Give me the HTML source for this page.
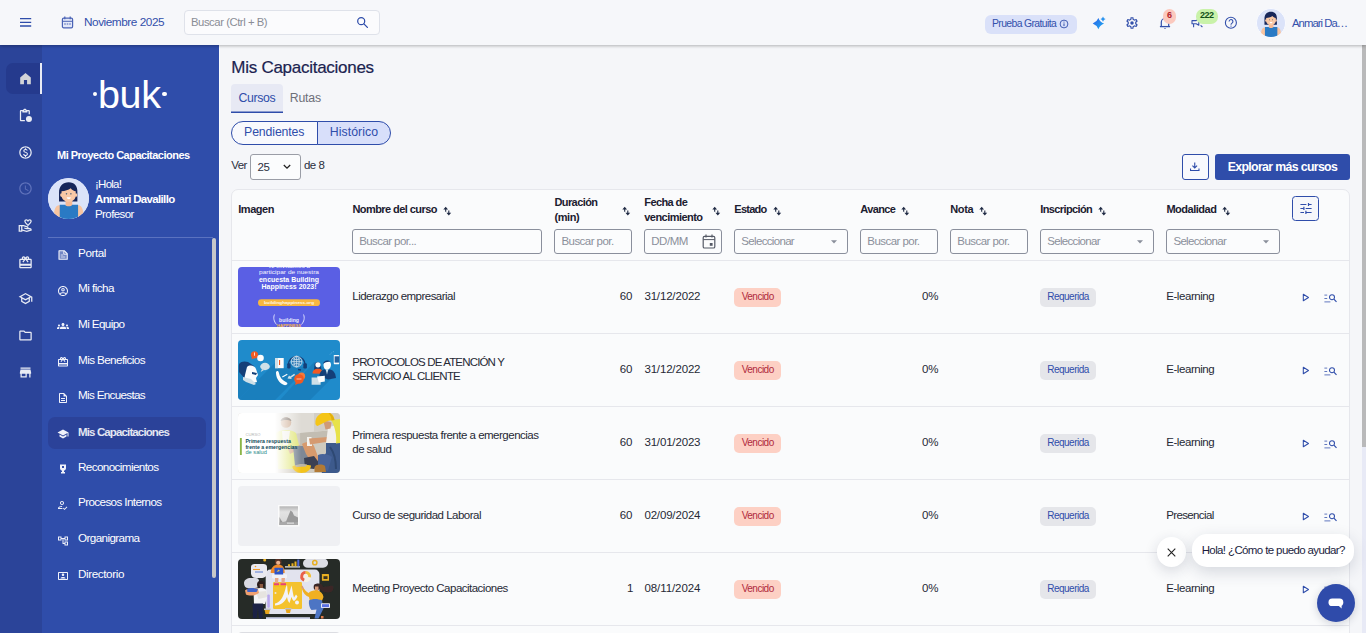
<!DOCTYPE html>
<html lang="es">
<head>
<meta charset="utf-8">
<title>Mis Capacitaciones</title>
<style>
*{box-sizing:border-box;margin:0;padding:0}
html,body{width:1366px;height:633px;overflow:hidden}
body{font-family:"Liberation Sans",sans-serif;font-size:12px;color:#1f2a44;background:#f5f6f9;position:relative}
.abs{position:absolute}
svg{display:block}
/* top bar */
#top{position:absolute;left:0;top:0;width:1366px;height:45px;background:#f6f7fa;box-shadow:0 1px 3px rgba(0,0,0,.28);z-index:10}
#top .t{position:absolute;white-space:nowrap}
/* rail */
#rail{position:absolute;left:0;top:45px;width:42px;height:588px;background:#2b4499}
#side{position:absolute;left:42px;top:45px;width:177px;height:588px;background:#2f4daa;color:#fff}
#side .mi{position:absolute;left:36px;white-space:nowrap;font-size:11.700px;color:#fff;letter-spacing:-.35px}
#side .ic{position:absolute;left:14.700px}
/* main */
#main{position:absolute;left:219px;top:45px;width:1147px;height:588px;background:#f5f6f9;overflow:hidden}
#main .t{position:absolute;white-space:nowrap}
.card{position:absolute;left:12px;top:145px;width:1119px;height:460px;background:#fafbfc;border:1px solid #e6e7ec;border-radius:7px}
.th{position:absolute;font-weight:bold;font-size:11px;color:#1c2030;white-space:nowrap;letter-spacing:-.3px;line-height:15px}
.inp{position:absolute;top:39px;height:25px;border:1px solid #8a8f9c;border-radius:3px;background:#fbfcfd;font-size:11.5px;color:#8b909b;padding:0 0 0 6px;line-height:23px;white-space:nowrap;overflow:hidden;letter-spacing:-.3px}
.row{position:absolute;left:0;width:1117px;height:73px;border-top:1px solid #e6e7ec}
.row .c{position:absolute;white-space:nowrap;font-size:11.5px;color:#262935;letter-spacing:-.3px;line-height:14px}
.thumb{position:absolute;left:6px;top:6px;width:102px;height:60px;border-radius:4px;overflow:hidden}
.bad{position:absolute;height:19px;border-radius:5px;font-size:10px;line-height:18px;text-align:center;letter-spacing:-.3px}
.venc{left:502px;width:47px;background:#fdd0c4;color:#b02a3c}
.req{left:808px;width:56px;background:#e5e6ea;color:#2f4daa}
</style>
</head>
<body>
<svg width="0" height="0" style="position:absolute"><defs>
<symbol id="ava" viewBox="0 0 30 30"><circle cx="15" cy="15" r="15" fill="#dbe3f9"/>
<path d="M8 17V10.5C8 5.8 10.8 3 15 3s6.6 2.8 6.3 7.5V17H8z" fill="#16265a"/>
<path d="M4.4 30c-.3-5 .2-8.800 2.400-9.900 1-.5 2-.3 2.400.4V30zM25.600 30c.3-5-.2-8.800-2.400-9.900-1-.5-2-.3-2.400.4V30z" fill="#f8c4a0"/>
<rect x="12.700" y="14" width="4.900" height="7" fill="#f5b995"/>
<path d="M8.500 19.300h4c.4 1.500 4.600 1.500 5 0h4.300V30H8.500z" fill="#2a7ac4"/>
<path d="M9.800 9.600c2.500-.2 5-.9 6.700-2.200.8 1.200 2.200 2 3.600 2.200v3.200c0 2.400-2.400 4.500-5.100 4.500s-5.200-2.100-5.200-4.500z" fill="#f9c8a6"/>
<ellipse cx="9.700" cy="12.400" rx=".9" ry="1.300" fill="#f9c8a6"/><ellipse cx="20.300" cy="12.400" rx=".9" ry="1.300" fill="#f9c8a6"/>
<circle cx="13.400" cy="11.500" r=".55" fill="#5b6b7a"/><circle cx="16.600" cy="11.500" r=".55" fill="#5b6b7a"/>
<path d="M13.600 14h2.900c-.1 1-.8 1.400-1.450 1.400S13.700 15 13.600 14z" fill="#fff"/>
</symbol></defs></svg>
<div id="top">
<svg class="abs" style="left:20px;top:17px" width="12" height="11" viewBox="0 0 12 11"><path d="M0 1.600h11.200M0 5.300h11.200M0 9h11.200" stroke="#2f4daa" stroke-width="1.300" fill="none"/></svg>
<svg class="abs" style="left:61px;top:16px" width="13" height="13" viewBox="0 0 13 13"><rect x="1.4" y="2.2" width="10.2" height="9.6" rx="1.3" fill="#e3e8f8" stroke="#4a63b5" stroke-width="1.2"/><path d="M3.8 .6v2.6M9.2 .6v2.6" stroke="#4a63b5" stroke-width="1.2"/><path d="M1.4 5.3h10.2" stroke="#4a63b5" stroke-width="1"/><path d="M3.2 8h1.6M5.7 8h1.6M8.2 8h1.6" stroke="#4a63b5" stroke-width="1.2"/></svg>
<div class="t" style="left:84px;top:15px;font-size:11.8px;line-height:15px;color:#3350ab;letter-spacing:-.46px">Noviembre 2025</div>
<div class="abs" style="left:184px;top:10px;width:196px;height:25px;border:1px solid #dfe2ea;border-radius:4px;background:#fbfbfd"></div>
<div class="t" style="left:191px;top:15px;font-size:11.3px;line-height:15px;color:#8a8d96;letter-spacing:-.45px">Buscar (Ctrl + B)</div>
<svg class="abs" style="left:356px;top:16px" width="13" height="13" viewBox="0 0 13 13"><circle cx="5.2" cy="5.2" r="3.5" fill="none" stroke="#2f4daa" stroke-width="1.25"/><path d="M7.9 7.9l3.5 3.5" stroke="#2f4daa" stroke-width="1.3" stroke-linecap="round"/></svg>
<div class="abs" style="left:985px;top:15px;width:92px;height:19px;border-radius:6px;background:#dae1f9"></div>
<div class="t" style="letter-spacing:-0.62px;left:992px;top:17px;font-size:10.4px;line-height:14px;color:#3350ab">Prueba Gratuita</div>
<svg class="abs" style="left:1059px;top:19px" width="10" height="10" viewBox="0 0 10 10"><circle cx="5" cy="5" r="3.9" fill="none" stroke="#3350ab" stroke-width=".9"/><path d="M5 4.4v2.7" stroke="#3350ab" stroke-width="1"/><circle cx="5" cy="3" r=".6" fill="#3350ab"/></svg>
<svg class="abs" style="left:1092px;top:16px" width="14" height="14" viewBox="0 0 14 14"><defs><linearGradient id="spk" x1="0" y1="0" x2="1" y2="1"><stop offset="0" stop-color="#2a5fe8"/><stop offset="1" stop-color="#23b0f0"/></linearGradient></defs><path d="M6.400 1.900Q8 6 12.100 7.600Q8 9.200 6.400 13.300Q4.800 9.200.7 7.600Q4.800 6 6.400 1.900Z" fill="url(#spk)"/><path d="M11 .5Q11.600 2.500 13.600 3.100Q11.600 3.700 11 5.700Q10.400 3.700 8.400 3.100Q10.400 2.500 11 .5Z" fill="#2a93ee"/></svg>
<svg class="abs" style="left:1125px;top:15.5px" width="14" height="14" viewBox="0 0 24 24"><path fill="#3350ab" d="M19.43 12.98c.04-.32.07-.64.07-.98s-.03-.66-.07-.98l2.11-1.65c.19-.15.24-.42.12-.64l-2-3.46c-.12-.22-.39-.3-.61-.22l-2.49 1c-.52-.4-1.08-.73-1.69-.98l-.38-2.65C14.46 2.18 14.25 2 14 2h-4c-.25 0-.46.18-.49.42l-.38 2.65c-.61.25-1.17.59-1.69.98l-2.49-1c-.23-.09-.49 0-.61.22l-2 3.46c-.13.22-.07.49.12.64l2.11 1.65c-.04.32-.07.65-.07.98s.03.66.07.98l-2.11 1.65c-.19.15-.24.42-.12.64l2 3.46c.12.22.39.3.61.22l2.49-1c.52.4 1.08.73 1.69.98l.38 2.65c.03.24.24.42.49.42h4c.25 0 .46-.18.49-.42l.38-2.65c.61-.25 1.17-.59 1.69-.98l2.49 1c.23.09.49 0 .61-.22l2-3.46c.12-.22.07-.49-.12-.64l-2.11-1.65zm-1.98-1.71c.04.31.05.52.05.73 0 .21-.02.43-.05.73l-.14 1.13.89.7 1.08.84-.7 1.21-1.27-.51-1.04-.42-.9.68c-.43.32-.84.56-1.25.73l-1.06.43-.16 1.13-.2 1.35h-1.4l-.19-1.35-.16-1.13-1.06-.43c-.43-.18-.83-.41-1.23-.71l-.91-.7-1.06.43-1.27.51-.7-1.21 1.08-.84.89-.7-.14-1.13c-.03-.31-.05-.54-.05-.74s.02-.43.05-.73l.14-1.13-.89-.7-1.08-.84.7-1.21 1.27.51 1.04.42.9-.68c.43-.32.84-.56 1.25-.73l1.06-.43.16-1.13.2-1.35h1.39l.19 1.35.16 1.13 1.06.43c.43.18.83.41 1.23.71l.91.7 1.06-.43 1.27-.51.7 1.21-1.07.85-.89.7.14 1.13z"/><circle cx="12" cy="12" r="3" fill="#3350ab"/></svg>
<svg class="abs" style="left:1159px;top:16px" width="12" height="14" viewBox="0 0 12 14"><path d="M2.3 10.3V6.2a3.7 3.7 0 0 1 7.4 0v4.1" fill="none" stroke="#3350ab" stroke-width="1.2"/><path d="M.9 10.6h10.2" stroke="#3350ab" stroke-width="1.3"/><path d="M4.9 12.1a1.2 1.2 0 0 0 2.2 0z" fill="#3350ab"/></svg>
<div class="abs" style="left:1163px;top:9px;width:13px;height:15px;border-radius:6.5px;background:#fbc9be"></div>
<div class="t" style="left:1163px;top:9.300px;width:13px;text-align:center;font-size:9px;line-height:13px;color:#b4232c;font-weight:bold">6</div>
<svg class="abs" style="left:1191px;top:19px" width="13" height="10" viewBox="0 0 13 10"><path d="M1 1.6h4.2l2.6-1.4v6l-2.6-1.4H1z" fill="none" stroke="#3350ab" stroke-width="1.1" stroke-linejoin="round"/><path d="M2.6 5v3.2M9.6 6.4l1.8 1.6" stroke="#3350ab" stroke-width="1.1"/></svg>
<div class="abs" style="left:1196px;top:9px;width:22px;height:15px;border-radius:7px;background:#c9f2a9"></div>
<div class="t" style="left:1196px;top:9.300px;width:22px;text-align:center;font-size:9px;line-height:13px;color:#14501a;font-weight:bold;letter-spacing:-.55px;text-indent:-.5px">222</div>
<svg class="abs" style="left:1224px;top:16px" width="14" height="14" viewBox="0 0 14 14"><circle cx="6.9" cy="6.8" r="5.5" fill="none" stroke="#3350ab" stroke-width="1.1"/><path d="M5.1 5.5a1.9 1.9 0 1 1 2.9 1.6c-.7.5-1 .8-1 1.6" fill="none" stroke="#3350ab" stroke-width="1.1"/><circle cx="7" cy="10.1" r=".7" fill="#3350ab"/></svg>
<div class="abs" id="av1" style="left:1256px;top:8px;width:30px;height:30px;border-radius:50%;background:#dce3f8;border:1px solid #fbfcff;overflow:hidden"><svg width="28" height="28"><use href="#ava"/></svg></div>
<div class="t" style="letter-spacing:-0.95px;left:1292px;top:16px;font-size:11.3px;line-height:14px;color:#3350ab">Anmari Da…</div>
</div>
<div id="rail">
<div class="abs" style="left:6px;top:18px;width:36px;height:31px;border-radius:7px 0 0 7px;background:#253a8d"></div>
<div class="abs" style="left:40px;top:18px;width:2px;height:31px;background:#e9ecf5"></div>
<svg class="abs" style="left:18px;top:26.1px" width="15" height="15" viewBox="0 0 24 24" fill="#d3d4d8"><path d="M12 3L3.500 10.500V21h6v-6.500h5V21h6V10.500z"/></svg>
<svg class="abs" style="left:18px;top:62.8px" width="15" height="15" viewBox="0 0 24 24" fill="#e9ecf5"><path d="M5 5h2v2h8V5h2v5h2V5c0-1.100-.9-2-2-2h-3.200C13.400 1.800 12.300 1 11 1S8.600 1.800 8.200 3H5c-1.100 0-2 .9-2 2v14c0 1.100.9 2 2 2h6v-2H5zm6-2c.55 0 1 .45 1 1s-.45 1-1 1-1-.45-1-1 .45-1 1-1z"/><circle cx="17.500" cy="17.500" r="4.800"/></svg>
<svg class="abs" style="left:18px;top:99.5px" width="15" height="15" viewBox="0 0 24 24" fill="#e9ecf5"><path d="M12 2C6.480 2 2 6.480 2 12s4.480 10 10 10 10-4.480 10-10S17.520 2 12 2zm0 18c-4.410 0-8-3.590-8-8s3.590-8 8-8 8 3.590 8 8-3.590 8-8 8zm.890-8.900c-1.780-.590-2.640-.960-2.640-1.900 0-1.020 1.110-1.390 1.810-1.390 1.310 0 1.790.990 1.900 1.340l1.580-.670c-.150-.440-.820-1.910-2.660-2.230V5h-1.750v1.260c-2.600.560-2.620 2.850-2.620 2.960 0 2.270 2.250 2.910 3.350 3.310 1.580.560 2.280 1.070 2.280 2.030 0 1.130-1.050 1.610-1.980 1.610-1.820 0-2.340-1.870-2.400-2.090l-1.660.670c.630 2.190 2.280 2.780 3.020 2.960V19h1.750v-1.240c.520-.090 3.020-.590 3.020-3.220.010-1.390-.600-2.610-3-3.440z"/></svg>
<svg class="abs" style="left:18px;top:136.2px" width="15" height="15" viewBox="0 0 24 24" fill="#5f72bb"><path d="M11.990 2C6.470 2 2 6.480 2 12s4.470 10 9.990 10C17.520 22 22 17.520 22 12S17.520 2 11.990 2zM12 20c-4.420 0-8-3.580-8-8s3.580-8 8-8 8 3.580 8 8-3.580 8-8 8zm.500-13H11v6l5.250 3.150.750-1.230-4.500-2.670z"/></svg>
<svg class="abs" style="left:18px;top:172.9px" width="15" height="15" viewBox="0 0 24 24" fill="#e9ecf5"><path d="M16 13c3.090-2.810 6-5.440 6-7.700C22 3.450 20.550 2 18.700 2c-1.040 0-2.050.490-2.700 1.250C15.340 2.490 14.340 2 13.300 2 11.450 2 10 3.450 10 5.300c0 2.260 2.910 4.890 6 7.700zm-2.700-9c.440 0 .890.210 1.180.550L16 6.340l1.520-1.790c.290-.340.740-.550 1.180-.550.740 0 1.300.560 1.300 1.300 0 1.120-2.040 3.170-4 4.990-1.960-1.820-4-3.880-4-4.990 0-.740.560-1.300 1.300-1.300zM19 16h-2c0-1.200-.750-2.280-1.870-2.700L8.970 11H1v11h6v-1.440l7 1.940 8-2.500v-1c0-1.660-1.340-3-3-3zM3 20v-7h2v7H3zm10.970.410L7 18.480V13h1.610l5.820 2.170c.340.130.570.460.570.830 0 0-1.990-.050-2.300-.150l-2.380-.790-.630 1.900 2.380.790c.510.170 1.040.260 1.580.260H19c.390 0 .740.230.900.560l-5.930 1.840z"/></svg>
<svg class="abs" style="left:18px;top:209.6px" width="15" height="15" viewBox="0 0 24 24" fill="#e9ecf5"><path d="M20 6h-2.180c.11-.31.180-.65.180-1 0-1.660-1.340-3-3-3-1.050 0-1.960.54-2.500 1.350l-.5.670-.5-.68C10.960 2.540 10.050 2 9 2 7.340 2 6 3.340 6 5c0 .35.070.69.180 1H4c-1.110 0-1.990.89-1.990 2L2 19c0 1.110.89 2 2 2h16c1.110 0 2-.89 2-2V8c0-1.110-.89-2-2-2zm-5-2c.55 0 1 .45 1 1s-.45 1-1 1-1-.45-1-1 .45-1 1-1zM9 4c.55 0 1 .45 1 1s-.45 1-1 1-1-.45-1-1 .45-1 1-1zm11 15H4v-2h16v2zm0-5H4V8h5.080L7 10.830 8.620 12 11 8.760l1-1.360 1 1.360L15.380 12 17 10.830 14.920 8H20v6z"/></svg>
<svg class="abs" style="left:18px;top:246.3px" width="15" height="15" viewBox="0 0 24 24" fill="#e9ecf5"><path d="M12 3L1 9l4 2.180v6L12 21l7-3.820v-6l2-1.090V17h2V9L12 3zm6.820 6L12 12.720 5.180 9 12 5.280 18.820 9zM17 15.990l-5 2.730-5-2.730v-3.720L12 15l5-2.730v3.720z"/></svg>
<svg class="abs" style="left:18px;top:283.0px" width="15" height="15" viewBox="0 0 24 24" fill="#e9ecf5"><path d="M9.170 6l2 2H20v10H4V6h5.170M10 4H4c-1.100 0-1.990.9-1.990 2L2 18c0 1.100.9 2 2 2h16c1.100 0 2-.9 2-2V8c0-1.100-.9-2-2-2h-8l-2-2z"/></svg>
<svg class="abs" style="left:18px;top:319.7px" width="15" height="15" viewBox="0 0 24 24" fill="#e9ecf5"><path d="M20 4H4v2h16V4zm1 10v-2l-1-5H4l-1 5v2h1v6h10v-6h4v6h2v-6h1zm-9 4H6v-4h6v4z"/></svg>
</div>
<div id="side">
<div class="abs" style="left:50.700px;top:46.500px;width:4.400px;height:4.400px;border-radius:50%;background:#fff"></div>
<div class="abs" style="left:120.300px;top:46.500px;width:4.400px;height:4.400px;border-radius:50%;background:#fff"></div>
<div class="abs" id="logo" style="left:56px;top:25.500px;font-size:39.500px;line-height:46px;color:#fff;letter-spacing:-.4px;white-space:nowrap">buk</div>
<div class="abs" style="letter-spacing:-0.52px;left:15px;top:103px;font-size:11px;line-height:14px;font-weight:bold;color:#fff;white-space:nowrap">Mi Proyecto Capacitaciones</div>
<div class="abs" style="left:5.800px;top:132.500px;width:41.400px;height:41.400px;border-radius:50%;overflow:hidden;background:#dbe3f9"><svg width="41.400" height="41.400"><use href="#ava"/></svg></div>
<div class="abs" style="letter-spacing:-0.75px;left:53px;top:132px;font-size:11.500px;line-height:14px;color:#fff;white-space:nowrap">¡Hola!</div>
<div class="abs" style="letter-spacing:-0.66px;left:53px;top:147px;font-size:11.500px;line-height:14px;font-weight:bold;color:#fff;white-space:nowrap">Anmari Davalillo</div>
<div class="abs" style="letter-spacing:-0.58px;left:53px;top:162px;font-size:11.500px;line-height:14px;color:#fff;white-space:nowrap">Profesor</div>
<div class="abs" style="left:6px;top:191.500px;width:165px;height:1px;background:#5a72c0"></div>
<div class="abs" style="left:170px;top:193px;width:4px;height:340px;border-radius:2px;background:#c6c7ca"></div>
<div class="abs" style="left:6px;top:372.200px;width:157.800px;height:31.600px;border-radius:7px;background:#2b4299"></div>
<svg class="ic" style="top:204.1px" width="12" height="12" viewBox="0 0 24 24" fill="#f0f2fa"><path d="M4 3.500h10.500L20.500 9.500V20.500H4z" fill="#f0f2fa" fill-opacity=".35" stroke="#f0f2fa" stroke-width="2.200" stroke-linejoin="round"/><path d="M13.500 4v6.500H20" fill="none" stroke="#f0f2fa" stroke-width="1.800"/><path d="M7.500 12h5M7.500 16h9" stroke="#f0f2fa" stroke-width="1.600"/></svg><div class="mi" style="letter-spacing:-0.42px;top:199.5px;line-height:15px">Portal</div>
<svg class="ic" style="top:239.8px" width="12" height="12" viewBox="0 0 24 24" fill="#f0f2fa"><path d="M12 2C6.480 2 2 6.480 2 12s4.480 10 10 10 10-4.480 10-10S17.520 2 12 2zM7.070 18.280c.430-.900 3.050-1.780 4.930-1.780s4.510.880 4.930 1.780C15.570 19.360 13.860 20 12 20s-3.570-.640-4.930-1.720zm11.290-1.450c-1.430-1.740-4.900-2.330-6.360-2.330s-4.930.590-6.360 2.330C4.620 15.490 4 13.820 4 12c0-4.410 3.590-8 8-8s8 3.590 8 8c0 1.820-.620 3.490-1.640 4.830zM12 6c-1.940 0-3.500 1.560-3.500 3.500S10.060 13 12 13s3.500-1.560 3.500-3.500S13.940 6 12 6zm0 5c-.830 0-1.500-.670-1.500-1.500S11.170 8 12 8s1.500.670 1.500 1.500S12.830 11 12 11z"/></svg><div class="mi" style="letter-spacing:-0.54px;top:235.2px;line-height:15px">Mi ficha</div>
<svg class="ic" style="top:275.4px" width="12" height="12" viewBox="0 0 24 24" fill="#f0f2fa"><path d="M12 12.750c1.630 0 3.070.390 4.240.900 1.080.480 1.760 1.560 1.760 2.730V18H6v-1.610c0-1.180.680-2.260 1.760-2.730 1.170-.520 2.610-.910 4.240-.910zM4 13c1.100 0 2-.900 2-2s-.900-2-2-2-2 .900-2 2 .900 2 2 2zm1.130 1.100C4.760 14.040 4.390 14 4 14c-.990 0-1.930.210-2.780.580C.480 14.900 0 15.620 0 16.430V18h4.500v-1.610c0-.830.230-1.610.630-2.290zM20 13c1.100 0 2-.900 2-2s-.900-2-2-2-2 .900-2 2 .900 2 2 2zm4 3.430c0-.810-.480-1.530-1.220-1.850-.850-.370-1.790-.580-2.780-.580-.390 0-.760.040-1.130.100.400.680.630 1.460.630 2.290V18H24v-1.570zM12 6c1.660 0 3 1.340 3 3s-1.340 3-3 3-3-1.340-3-3 1.340-3 3-3z"/></svg><div class="mi" style="letter-spacing:-0.61px;top:270.8px;line-height:15px">Mi Equipo</div>
<svg class="ic" style="top:311.1px" width="12" height="12" viewBox="0 0 24 24" fill="#f0f2fa"><path d="M20 6h-2.180c.11-.31.180-.65.180-1 0-1.660-1.340-3-3-3-1.050 0-1.960.54-2.500 1.350l-.5.670-.5-.68C10.960 2.540 10.050 2 9 2 7.340 2 6 3.340 6 5c0 .35.070.69.180 1H4c-1.110 0-1.990.89-1.990 2L2 19c0 1.110.89 2 2 2h16c1.110 0 2-.89 2-2V8c0-1.110-.89-2-2-2zm-5-2c.55 0 1 .45 1 1s-.45 1-1 1-1-.45-1-1 .45-1 1-1zM9 4c.55 0 1 .45 1 1s-.45 1-1 1-1-.45-1-1 .45-1 1-1zm11 15H4v-2h16v2zm0-5H4V8h5.080L7 10.830 8.620 12 11 8.760l1-1.360 1 1.360L15.380 12 17 10.830 14.920 8H20v6z"/></svg><div class="mi" style="letter-spacing:-0.60px;top:306.5px;line-height:15px">Mis Beneficios</div>
<svg class="ic" style="top:346.8px" width="12" height="12" viewBox="0 0 24 24" fill="#f0f2fa"><path d="M8 16h8v2H8zm0-4h8v2H8zm6-10H6c-1.100 0-2 .900-2 2v16c0 1.100.890 2 1.990 2H18c1.100 0 2-.900 2-2V8l-6-6zm4 18H6V4h7v5h5v11z"/></svg><div class="mi" style="letter-spacing:-0.69px;top:342.2px;line-height:15px">Mis Encuestas</div>
<svg class="ic" style="top:382.5px" width="12" height="12" viewBox="0 0 24 24" fill="#f0f2fa"><path d="M5 13.180v4L12 21l7-3.820v-4L12 17l-7-3.820zM12 3L1 9l11 6 9-4.910V17h2V9L12 3z"/></svg><div class="mi" style="letter-spacing:-0.87px;top:379.8px;line-height:15px;font-weight:bold;color:#e3e6f1;font-size:11.500px">Mis Capacitaciones</div>
<svg class="ic" style="top:418.1px" width="12" height="12" viewBox="0 0 24 24" fill="#f0f2fa"><path d="M18 3H6v7c0 2.600 1.700 4.800 4 5.600V18H8v3h8v-3h-2v-2.400c2.300-.800 4-3 4-5.600zm-8 3h4v4h-4z" fill-rule="evenodd"/></svg><div class="mi" style="letter-spacing:-0.61px;top:413.5px;line-height:15px">Reconocimientos</div>
<svg class="ic" style="top:453.8px" width="12" height="12" viewBox="0 0 24 24" fill="#f0f2fa"><path d="M10 12c2.210 0 4-1.790 4-4s-1.790-4-4-4-4 1.790-4 4 1.790 4 4 4zm0-6c1.100 0 2 .900 2 2s-.900 2-2 2-2-.900-2-2 .900-2 2-2zM4 18c.220-.720 3.310-2 6-2 0-.700.130-1.370.350-1.990C7.620 13.910 2 15.270 2 18v2h9.540c-.520-.580-.930-1.250-1.190-2H4zm15.430-2.980l-4.430 4.440-1.760-1.770-1.240 1.250 3 3.060 5.670-5.730z"/></svg><div class="mi" style="letter-spacing:-0.63px;top:449.2px;line-height:15px">Procesos Internos</div>
<svg class="ic" style="top:489.5px" width="12" height="12" viewBox="0 0 24 24" fill="#f0f2fa"><path d="M22 11V3h-7v3H9V3H2v8h7V8h2v10h4v3h7v-8h-7v3h-2V8h2v3h7zM7 9H4V5h3v4zm10 6h3v4h-3v-4zm0-10h3v4h-3V5z"/></svg><div class="mi" style="letter-spacing:-0.61px;top:484.9px;line-height:15px">Organigrama</div>
<svg class="ic" style="top:525.1px" width="12" height="12" viewBox="0 0 24 24" fill="#f0f2fa"><path d="M20 4H4c-1.100 0-2 .900-2 2v12c0 1.100.900 2 2 2h16c1.100 0 2-.900 2-2V6c0-1.100-.900-2-2-2zm0 14H4V6h16v12zM12 12c1.380 0 2.500-1.120 2.500-2.500S13.380 7 12 7 9.500 8.120 9.500 9.500 10.620 12 12 12zm5 4.430c0-1.680-3.330-2.430-5-2.430s-5 .750-5 2.430V17h10v-.570z"/></svg><div class="mi" style="letter-spacing:-0.40px;top:520.5px;line-height:15px">Directorio</div>
</div>
<div class="abs" style="left:219px;top:45px;width:1px;height:588px;background:#fbfcfe;z-index:3"></div>
<div id="main">
<div class="t" style="letter-spacing:-0.27px;left:12.3px;top:12.900px;font-size:17px;line-height:20px;color:#1b2350;-webkit-text-stroke:.2px #1b2350">Mis Capacitaciones</div>
<div class="abs" style="left:12px;top:39px;width:52px;height:29px;background:#e7e9f4;border-radius:4px 4px 0 0"></div><div class="abs" style="left:12px;top:66px;width:52px;height:1px;background:#2f4daa;opacity:.5"></div><div class="abs" style="left:12px;top:67px;width:52px;height:1px;background:#2f4daa"></div>
<div class="t" style="letter-spacing:-0.33px;left:19.4px;top:46px;font-size:12.3px;line-height:15px;color:#2f4daa">Cursos</div>
<div class="t" style="letter-spacing:-0.19px;left:70.7px;top:46px;font-size:12.3px;line-height:15px;color:#6d6f78">Rutas</div>
<div class="abs" style="left:12.0px;top:76.0px;width:87px;height:24px;border:1px solid #2f4daa;border-radius:12px 0 0 12px;background:#f8f9fd"></div>
<div class="abs" style="left:98.0px;top:76.0px;width:74px;height:24px;border:1px solid #2f4daa;border-radius:0 12px 12px 0;background:#d8dffa"></div>
<div class="t" style="letter-spacing:-0.13px;left:25.1px;top:80.0px;font-size:12.3px;line-height:15px;color:#2f4daa">Pendientes</div>
<div class="t" style="letter-spacing:0.07px;left:110.7px;top:80.0px;font-size:12.3px;line-height:15px;color:#2f4daa">Histórico</div>
<div class="t" style="letter-spacing:-0.59px;left:12.3px;top:113.0px;font-size:11.5px;line-height:15px;color:#2a2f3d">Ver</div>
<div class="abs" style="left:31.3px;top:109.2px;width:50.5px;height:25.8px;border:1px solid #9a9da6;border-radius:3px;background:#fbfcfd"></div>
<div class="t" style="letter-spacing:-0.40px;left:38.4px;top:114.5px;font-size:11.5px;line-height:15px;color:#2a2f3d">25</div>
<svg class="abs" style="left:64.0px;top:119.0px" width="8" height="6" viewBox="0 0 8 6"><path d="M.8 1l3.200 3.200L7.200 1" fill="none" stroke="#222" stroke-width="1.300"/></svg>
<div class="t" style="letter-spacing:-0.47px;left:84.9px;top:113.0px;font-size:11.5px;line-height:15px;color:#2a2f3d">de 8</div>
<div class="abs" style="left:962.5px;top:109.0px;width:27px;height:26px;border:1px solid #2f4daa;border-radius:3px;background:#f8f9fd"></div>
<svg class="abs" style="left:971.2px;top:117.4px" width="9.500" height="9.500" viewBox="0 0 11 11"><path d="M5.500 .5v6M2.800 4.200l2.700 2.600 2.700-2.600" fill="none" stroke="#2f4daa" stroke-width="1.300"/><path d="M.6 7.500v2.400h9.800V7.500" fill="none" stroke="#2f4daa" stroke-width="1.300"/></svg>
<div class="abs" style="left:996.0px;top:109.0px;width:135px;height:26px;border-radius:3px;background:#2f4daa"></div>
<div class="t" style="letter-spacing:-0.64px;left:1008.7px;top:114.5px;font-size:12.3px;line-height:15px;color:#fff;font-weight:bold">Explorar más cursos</div>
<div class="card" style="left:12px;top:144px;width:1119px;height:460px">
<div class="th" style="letter-spacing:-0.49px;left:6.3px;top:11.9px">Imagen</div>
<div class="th" style="letter-spacing:-0.56px;left:120.4px;top:11.9px">Nombre del curso</div>
<svg class="abs" style="left:210.5px;top:16.0px" width="9" height="10" viewBox="0 0 9 10"><path d="M.3 3.400L2.700.7l2.400 2.700zM3.400 6.800h4.800L5.800 9.500z" fill="#1f2a44"/><path d="M2.700 2.800v2.900M5.800 4.400v2.900" stroke="#1f2a44" stroke-width="1.100"/></svg><div class="th" style="letter-spacing:-0.57px;left:322.4px;top:4.9px">Duración</div>
<div class="th" style="letter-spacing:-0.42px;left:322.4px;top:19.7px">(min)</div>
<svg class="abs" style="left:390.0px;top:16.0px" width="9" height="10" viewBox="0 0 9 10"><path d="M.3 3.400L2.700.7l2.400 2.700zM3.400 6.800h4.800L5.800 9.500z" fill="#1f2a44"/><path d="M2.700 2.800v2.900M5.800 4.400v2.900" stroke="#1f2a44" stroke-width="1.100"/></svg><div class="th" style="letter-spacing:-0.60px;left:412.3px;top:4.9px">Fecha de</div>
<div class="th" style="letter-spacing:-0.55px;left:412.3px;top:19.7px">vencimiento</div>
<svg class="abs" style="left:480.0px;top:16.0px" width="9" height="10" viewBox="0 0 9 10"><path d="M.3 3.400L2.700.7l2.400 2.700zM3.400 6.800h4.800L5.800 9.500z" fill="#1f2a44"/><path d="M2.700 2.800v2.900M5.800 4.400v2.900" stroke="#1f2a44" stroke-width="1.100"/></svg><div class="th" style="letter-spacing:-0.73px;left:502.3px;top:11.9px">Estado</div>
<svg class="abs" style="left:540.5px;top:16.0px" width="9" height="10" viewBox="0 0 9 10"><path d="M.3 3.400L2.700.7l2.400 2.700zM3.400 6.800h4.800L5.800 9.500z" fill="#1f2a44"/><path d="M2.700 2.800v2.900M5.800 4.400v2.900" stroke="#1f2a44" stroke-width="1.100"/></svg><div class="th" style="letter-spacing:-0.64px;left:628.3px;top:11.9px">Avance</div>
<svg class="abs" style="left:668.8px;top:16.0px" width="9" height="10" viewBox="0 0 9 10"><path d="M.3 3.400L2.700.7l2.400 2.700zM3.400 6.800h4.800L5.800 9.500z" fill="#1f2a44"/><path d="M2.700 2.800v2.900M5.800 4.400v2.900" stroke="#1f2a44" stroke-width="1.100"/></svg><div class="th" style="letter-spacing:-0.39px;left:718.3px;top:11.9px">Nota</div>
<svg class="abs" style="left:746.5px;top:16.0px" width="9" height="10" viewBox="0 0 9 10"><path d="M.3 3.400L2.700.7l2.400 2.700zM3.400 6.800h4.800L5.800 9.500z" fill="#1f2a44"/><path d="M2.700 2.800v2.900M5.800 4.400v2.900" stroke="#1f2a44" stroke-width="1.100"/></svg><div class="th" style="letter-spacing:-0.61px;left:808.2px;top:11.9px">Inscripción</div>
<svg class="abs" style="left:866.0px;top:16.0px" width="9" height="10" viewBox="0 0 9 10"><path d="M.3 3.400L2.700.7l2.400 2.700zM3.400 6.800h4.800L5.800 9.500z" fill="#1f2a44"/><path d="M2.700 2.800v2.900M5.800 4.400v2.900" stroke="#1f2a44" stroke-width="1.100"/></svg><div class="th" style="letter-spacing:-0.49px;left:934.4px;top:11.9px">Modalidad</div>
<svg class="abs" style="left:989.5px;top:16.0px" width="9" height="10" viewBox="0 0 9 10"><path d="M.3 3.400L2.700.7l2.400 2.700zM3.400 6.800h4.800L5.800 9.500z" fill="#1f2a44"/><path d="M2.700 2.800v2.900M5.800 4.400v2.900" stroke="#1f2a44" stroke-width="1.100"/></svg><div class="inp" style="left:120.2px;top:39.2px;width:190px"><span style="letter-spacing:-0.58px">Buscar por...</span></div>
<div class="inp" style="left:322.4px;top:39.2px;width:77.5px"><span style="letter-spacing:-0.54px">Buscar por.</span></div>
<div class="inp" style="left:412.3px;top:39.2px;width:77.5px"><span style="display:inline-block;width:36.500px;overflow:hidden;vertical-align:top"><span style="letter-spacing:-0.48px">DD/MM/AAAA</span></span></div>
<svg class="abs" style="left:470.0px;top:43.5px" width="14" height="15" viewBox="0 0 14 15"><rect x="1.200" y="2.400" width="11.600" height="11.600" rx="1.300" fill="#fbfcfd" stroke="#555a66" stroke-width="1.200"/><path d="M4 .5v3M10 .5v3" stroke="#555a66" stroke-width="1.200"/><path d="M1.200 5.600h11.600" stroke="#555a66" stroke-width="1"/><rect x="7.800" y="9" width="2.800" height="2.800" fill="#555a66"/></svg>
<div class="inp" style="left:502.3px;top:39.2px;width:113.5px"><span style="letter-spacing:-0.67px">Seleccionar</span></div>
<svg class="abs" style="left:599.0px;top:50.0px" width="6" height="4" viewBox="0 0 6 4"><path d="M0 .3h6L3 3.500z" fill="#8a8f9b"/></svg>
<div class="inp" style="left:628.3px;top:39.2px;width:77.5px"><span style="letter-spacing:-0.54px">Buscar por.</span></div>
<div class="inp" style="left:718.3px;top:39.2px;width:77.5px"><span style="letter-spacing:-0.54px">Buscar por.</span></div>
<div class="inp" style="left:808.2px;top:39.2px;width:113.5px"><span style="letter-spacing:-0.67px">Seleccionar</span></div>
<svg class="abs" style="left:904.9px;top:50.0px" width="6" height="4" viewBox="0 0 6 4"><path d="M0 .3h6L3 3.500z" fill="#8a8f9b"/></svg>
<div class="inp" style="left:934.4px;top:39.2px;width:113.5px"><span style="letter-spacing:-0.67px">Seleccionar</span></div>
<svg class="abs" style="left:1031.1px;top:50.0px" width="6" height="4" viewBox="0 0 6 4"><path d="M0 .3h6L3 3.500z" fill="#8a8f9b"/></svg>
<div class="abs" style="left:1060.0px;top:6.0px;width:27px;height:24.800px;border:1px solid #2f4daa;border-radius:3.500px;background:#f6f7fa"></div>
<svg class="abs" style="left:1067.5px;top:12.0px" width="12" height="13" viewBox="0 0 12 13"><path d="M.4 2.500H6.400M8.500 2.500h3.100M.4 6.400h3.500M5.700 6.400h5.900M.4 10.400H4M5.900 10.400h5.700" stroke="#2f4daa" stroke-width="1.050"/><path d="M8.500.9v3.200M3.900 4.800V8M5.900 8.800V12" stroke="#2f4daa" stroke-width="1.200"/></svg>
<div class="row" style="top:70.0px"><div class="thumb"><svg width="102" height="60" viewBox="0 0 102 60"><rect width="102" height="60" fill="#5a5fe4"/>
<text x="51" y="1.200" font-family="Liberation Sans, sans-serif" font-size="4.600" font-weight="bold" fill="#e9eaff" text-anchor="middle" textLength="42" lengthAdjust="spacingAndGlyphs">Te invitamos a</text>
<text x="51" y="7.200" font-family="Liberation Sans, sans-serif" font-size="5" fill="#f4f4ff" text-anchor="middle" textLength="60" lengthAdjust="spacingAndGlyphs">participar de nuestra</text>
<text x="51" y="14.800" font-family="Liberation Sans, sans-serif" font-size="6.300" font-weight="bold" fill="#fff" text-anchor="middle" textLength="60" lengthAdjust="spacingAndGlyphs">encuesta Building</text>
<text x="51" y="22.300" font-family="Liberation Sans, sans-serif" font-size="6.300" font-weight="bold" fill="#fff" text-anchor="middle" textLength="55" lengthAdjust="spacingAndGlyphs">Happiness 2023!</text>
<rect x="20" y="32.300" width="62" height="6.700" rx="3.350" fill="#f8b73f"/>
<text x="51" y="37.300" font-family="Liberation Sans, sans-serif" font-size="4.400" font-weight="bold" fill="#fff7e6" text-anchor="middle" textLength="50" lengthAdjust="spacingAndGlyphs">buildinghappiness.org</text>
<path d="M36.500 47.500c-1.500 3.500-.5 7 2 10M65.500 47.500c1.500 3.500.5 7-2 10" fill="none" stroke="#e8e9ff" stroke-width=".9"/>
<text x="51" y="55.300" font-family="Liberation Sans, sans-serif" font-size="5.400" font-weight="bold" fill="#eceeff" text-anchor="middle" textLength="20" lengthAdjust="spacingAndGlyphs">building</text>
<text x="51" y="59.800" font-family="Liberation Sans, sans-serif" font-size="3.600" font-weight="bold" fill="#f8b73f" text-anchor="middle" textLength="24" lengthAdjust="spacingAndGlyphs">HAPPINESS</text>
</svg></div><div class="c" style="letter-spacing:-0.53px;left:120.3px;top:27.7px">Liderazgo empresarial</div><div class="c" style="letter-spacing:-0.30px;left:387.8px;top:27.7px">60</div><div class="c" style="letter-spacing:-0.16px;left:412.4px;top:27.7px">31/12/2022</div><div class="bad venc" style="left:502.2px;top:26.7px"><span style="letter-spacing:-0.50px">Vencido</span></div><div class="c" style="letter-spacing:-0.11px;left:690.0px;top:27.7px">0%</div><div class="bad req" style="left:808.0px;top:26.7px"><span style="letter-spacing:-0.52px">Requerida</span></div><div class="c" style="letter-spacing:-0.43px;left:934.2px;top:27.7px">E-learning</div><svg class="abs" style="left:1070.0px;top:32.0px" width="8" height="9" viewBox="0 0 8 9"><path d="M1.300 1.200v6.600l5.200-3.300z" fill="none" stroke="#2f4daa" stroke-width="1.050" stroke-linejoin="round"/></svg><svg class="abs" style="left:1092.0px;top:32.5px" width="14" height="9" viewBox="0 0 14 9"><path d="M.4 1.100h2.800M.4 4.500h2.800M.4 7.900h6" stroke="#2f4daa" stroke-width="1" opacity=".75"/><circle cx="8" cy="3.200" r="2.500" fill="none" stroke="#2f4daa" stroke-width="1.050"/><path d="M9.900 5.100l2.600 2.700" stroke="#2f4daa" stroke-width="1.150"/></svg></div>
<div class="row" style="top:143.0px"><div class="thumb"><svg width="102" height="60" viewBox="0 0 102 60"><rect width="102" height="60" fill="#1f8bcb"/>
<g fill="#1a7bb9" opacity=".75"><path d="M2 24L20 40 0 60h-0V26z"/><path d="M38 22l12 8-30 30H0l10-10z"/><path d="M52 24l17 4-32 32H17z"/><path d="M76 22l22 12-26 26H42z"/></g>
<path d="M1 24c2-3 6-3 9-2l6 4 2 12-10 2-7-8z" fill="#143f78"/>
<path d="M9 27c3-3 8-1 9 2l2 6-2 3 1 4-4 1-6-4-3 1 1-5z" fill="#fbfcfd"/>
<path d="M5 37l8 2 5 5-2 1-8-3-3-2z" fill="#cfe0e8"/><path d="M14 32l5 1-1 2-4-1z" fill="#143f78"/>
<circle cx="16.500" cy="14.800" r="3.600" fill="#f15a22"/><path d="M14 17l-.5 2.500 2.500-1.500z" fill="#f15a22"/><rect x="16" y="12.500" width="1" height="3.200" fill="#ffd9c8"/>
<circle cx="22.500" cy="18" r="3.300" fill="#fbfcfd"/>
<ellipse cx="27" cy="26.500" rx="4.800" ry="3.700" fill="#cfe0e8"/><path d="M24 29l-1.300 3 3.300-2z" fill="#cfe0e8"/>
<rect x="37" y="18" width="8.700" height="10.200" fill="#fbfcfd"/><rect x="37" y="18" width="3" height="10.200" fill="#cfe0e8"/><rect x="41" y="20" width="1.100" height="5" fill="#f15a22"/>
<path d="M50.200 25a8.500 8.500 0 0 1 17 0" fill="none" stroke="#143f78" stroke-width="1.400"/>
<rect x="49.200" y="23.200" width="3.300" height="5.200" rx="1.200" fill="#143f78"/><rect x="65.300" y="23.200" width="3.600" height="5.200" rx="1.200" fill="#143f78"/>
<circle cx="58.600" cy="21.600" r="5.400" fill="#2c78b4" stroke="#dbe9f1" stroke-width=".8"/><path d="M53.200 21.600h10.800M58.600 16.200v10.800M54.500 18.500c2.700 1.500 5.500 1.500 8.200 0M54.500 24.700c2.700-1.500 5.500-1.500 8.200 0" stroke="#dbe9f1" stroke-width=".7" fill="none"/><ellipse cx="58.600" cy="21.600" rx="2.600" ry="5.400" fill="none" stroke="#dbe9f1" stroke-width=".7"/>
<path d="M60 29.500l3 .5" stroke="#143f78" stroke-width="1.400"/>
<path d="M38 32c1-1.500 2.500-1 2.800.5.800 4.500 3.500 8 7.500 9.700 1.400.6 1.500 2 .2 2.600-1.500.7-3 .2-4.500-.8C40 41.300 37.800 37 38 32z" fill="#fbfcfd"/>
<path d="M44 36.500l5-2.800.6 1-5 2.800z" fill="#fbfcfd"/><path d="M49.500 38.500l1.500-3 1.200 1 4-2.700.9 1.300-4 2.700.6 1.300z" fill="#cfe0e8"/>
<circle cx="63.500" cy="36.200" r="3.600" fill="#f47b3a"/><circle cx="61" cy="39" r="4.800" fill="#f15a22"/><path d="M58 42l-1 3 3.500-1.500z" fill="#f15a22"/><path d="M58.500 39h5" stroke="#ffd9c8" stroke-width=".8"/>
<path d="M76.500 25.500c-.5-4 5.500-5 6-1l1 5.500h-7.500z" fill="#143f78"/><circle cx="80" cy="24.800" r="2.600" fill="#fbfcfd"/>
<path d="M74.500 33.500c0-3 2-4.800 5.500-4.800s4 1.700 4 3.300l-2 1.800z" fill="#f15a22"/>
<path d="M85.500 25c-.5-5 7.500-5.500 7.500-.5 0 2-1 4-2.500 5h-3c-1.300-1-2-2.700-2-4.500z" fill="#fbfcfd"/><path d="M85 24c.5-3.500 5-4.500 7.500-2-2.500-.5-5 0-7.500 2z" fill="#143f78"/>
<path d="M81.500 36c0-4 2.500-6.500 5.500-6.500l2 3 2-3c3.500 0 6.500 2.500 7 8.500l-8 1.500z" fill="#143f78"/><path d="M88 29.500h2l-1 5z" fill="#fbfcfd"/>
<path d="M73.600 37.500h9v7.300h-9z" fill="#cfe0e8"/><path d="M79 36.500l7.800-.8v5.800l-6 1z" fill="#fbfcfd"/>
<rect x="95.800" y="15" width="5.400" height="9.200" rx=".6" fill="#fbfcfd"/><rect x="96.600" y="16.300" width="4.600" height="6.300" fill="#2463a0"/>
<path d="M92 14.500c1-1.500 2.500-2.500 4-3" stroke="#7fc0e6" stroke-width=".6" fill="none" stroke-dasharray="1 1"/>
</svg></div><div class="c" style="letter-spacing:-0.84px;left:120.3px;top:20.7px">PROTOCOLOS DE ATENCIÓN Y</div><div class="c" style="letter-spacing:-0.79px;left:120.3px;top:34.7px">SERVICIO AL CLIENTE</div><div class="c" style="letter-spacing:-0.30px;left:387.8px;top:27.7px">60</div><div class="c" style="letter-spacing:-0.16px;left:412.4px;top:27.7px">31/12/2022</div><div class="bad venc" style="left:502.2px;top:26.7px"><span style="letter-spacing:-0.50px">Vencido</span></div><div class="c" style="letter-spacing:-0.11px;left:690.0px;top:27.7px">0%</div><div class="bad req" style="left:808.0px;top:26.7px"><span style="letter-spacing:-0.52px">Requerida</span></div><div class="c" style="letter-spacing:-0.43px;left:934.2px;top:27.7px">E-learning</div><svg class="abs" style="left:1070.0px;top:32.0px" width="8" height="9" viewBox="0 0 8 9"><path d="M1.300 1.200v6.600l5.200-3.300z" fill="none" stroke="#2f4daa" stroke-width="1.050" stroke-linejoin="round"/></svg><svg class="abs" style="left:1092.0px;top:32.5px" width="14" height="9" viewBox="0 0 14 9"><path d="M.4 1.100h2.800M.4 4.500h2.800M.4 7.900h6" stroke="#2f4daa" stroke-width="1" opacity=".75"/><circle cx="8" cy="3.200" r="2.500" fill="none" stroke="#2f4daa" stroke-width="1.050"/><path d="M9.900 5.100l2.600 2.700" stroke="#2f4daa" stroke-width="1.150"/></svg></div>
<div class="row" style="top:216.0px"><div class="thumb"><svg width="102" height="60" viewBox="0 0 102 60"><defs><filter id="b2" x="-10%" y="-10%" width="120%" height="120%"><feGaussianBlur stdDeviation=".65"/></filter><linearGradient id="fd2" x1="0" x2="1"><stop offset="0" stop-color="#fff"/><stop offset=".36" stop-color="#fff"/><stop offset=".62" stop-color="#fff" stop-opacity="0"/></linearGradient></defs>
<rect width="102" height="60" fill="#dcd8d0"/>
<g filter="url(#b2)">
<rect x="40" y="0" width="62" height="22" fill="#dedbd5"/><path d="M40 22l62-5v43H40z" fill="#cfcabf"/><path d="M62 20l34-3v8l-34 9z" fill="#c2bdb2"/><path d="M76 0h26v16l-26 3z" fill="#d2cec6"/>
<circle cx="48" cy="9.500" r="5.300" fill="#c9a58a"/><path d="M42.500 8c1-4.500 9-5.500 11 0-3-1.500-8-1.500-11 0z" fill="#6f6258"/>
<path d="M38 20c4-4 16-4 20 0l4 16-5 20H40z" fill="#e1e67c"/><path d="M44 18h8l-2 14h-5z" fill="#f1efe9"/>
<path d="M50 36l12-4 2 3-12 6z" fill="#d8a888"/>
<path d="M55 33h13l7 20H57z" fill="#7e8896"/>
<path d="M64 31c4-3 10-2 12 2l6 16-6 4-8-12z" fill="#d79a6d"/><path d="M66 45l10-2 6 8-6 5-9-1z" fill="#3a4052"/>
<path d="M69 24h4.500l.5 9h-5z" fill="#f5f3ee"/>
<path d="M71 25.500l19-1.500 1 4.500-19 3z" fill="#d59a70"/>
<path d="M88 30h14v30H84l-3-8c2-5 5-9 7-12z" fill="#3d5a8c"/><path d="M80 42c4-2 10-1 14 2l-4 14-10-4z" fill="#46639a"/><path d="M92 34c3 4 6 12 6 22" stroke="#2e4873" stroke-width="2" fill="none"/>
<path d="M90 15c3-2 8-3 12-2v17H88z" fill="#f2f0ec"/><path d="M93 7l9-1v24l-4 .5c1-8-1-17-5-23.500z" fill="#e7e24a"/>
<path d="M85.500 8.500c2-.5 6 0 8 1l-1 6-5 1z" fill="#cf9a78"/>
<path d="M77.400 10.500C77 3.500 82-.5 88-.5s8 3 8.500 7.500c-4 0-8 1-11 3l-6 3c-1.500-.5-2-1.500-2.100-2.500z" fill="#f5c518"/><path d="M92 0c2 2 4 4 4.500 7l-3 .5c0-3-1-5.500-3-7z" fill="#e0ae10"/>
<path d="M54.200 53.500c2-2 15-2.500 18.800-1 0 4-4 7.500-9.500 7.500S55 57 54.200 53.500z" fill="#f3c31d"/><path d="M57 52.500c2-1.500 9-2 12-1l-1 2-10 .5z" fill="#b9b4a8"/>
<path d="M76.500 54c2-3 7.500-3 10.500-1l1 6H76.500z" fill="#b27a36"/>
</g>
<rect width="102" height="60" fill="url(#fd2)"/>
<rect x="1.900" y="25" width="1.900" height="17" fill="#8cb548"/>
<text x="7.600" y="23" font-family="Liberation Sans, sans-serif" font-size="3" fill="#b5b5b5" textLength="15" lengthAdjust="spacingAndGlyphs">CURSO</text>
<text x="7.400" y="30" font-family="Liberation Sans, sans-serif" font-size="5.200" font-weight="bold" fill="#0e4a5a" textLength="45.500" lengthAdjust="spacingAndGlyphs">Primera respuesta</text>
<text x="7.400" y="35.800" font-family="Liberation Sans, sans-serif" font-size="5.200" font-weight="bold" fill="#0e4a5a" textLength="52" lengthAdjust="spacingAndGlyphs">frente a emergencias</text>
<text x="7.400" y="41.400" font-family="Liberation Sans, sans-serif" font-size="5.200" fill="#2b8c8c" textLength="21.500" lengthAdjust="spacingAndGlyphs">de salud</text>
</svg></div><div class="c" style="letter-spacing:-0.50px;left:120.3px;top:20.7px">Primera respuesta frente a emergencias</div><div class="c" style="letter-spacing:-0.56px;left:120.3px;top:34.7px">de salud</div><div class="c" style="letter-spacing:-0.30px;left:387.8px;top:27.7px">60</div><div class="c" style="letter-spacing:-0.16px;left:412.4px;top:27.7px">31/01/2023</div><div class="bad venc" style="left:502.2px;top:26.7px"><span style="letter-spacing:-0.50px">Vencido</span></div><div class="c" style="letter-spacing:-0.11px;left:690.0px;top:27.7px">0%</div><div class="bad req" style="left:808.0px;top:26.7px"><span style="letter-spacing:-0.52px">Requerida</span></div><div class="c" style="letter-spacing:-0.43px;left:934.2px;top:27.7px">E-learning</div><svg class="abs" style="left:1070.0px;top:32.0px" width="8" height="9" viewBox="0 0 8 9"><path d="M1.300 1.200v6.600l5.200-3.300z" fill="none" stroke="#2f4daa" stroke-width="1.050" stroke-linejoin="round"/></svg><svg class="abs" style="left:1092.0px;top:32.5px" width="14" height="9" viewBox="0 0 14 9"><path d="M.4 1.100h2.800M.4 4.500h2.800M.4 7.900h6" stroke="#2f4daa" stroke-width="1" opacity=".75"/><circle cx="8" cy="3.200" r="2.500" fill="none" stroke="#2f4daa" stroke-width="1.050"/><path d="M9.900 5.100l2.600 2.700" stroke="#2f4daa" stroke-width="1.150"/></svg></div>
<div class="row" style="top:289.0px"><div class="thumb"><svg width="102" height="60" viewBox="0 0 102 60"><defs><linearGradient id="phg" x1="0" y1="0" x2="0" y2="1"><stop offset="0" stop-color="#b4b4b4"/><stop offset=".3" stop-color="#e2e2e2"/><stop offset="1" stop-color="#d6d6d6"/></linearGradient></defs><rect width="102" height="60" fill="#eff0f3"/><rect x="40" y="19" width="21.500" height="21.500" fill="#fbfbfb"/><rect x="41.500" y="20.300" width="18.500" height="18.800" fill="url(#phg)"/><path d="M41.500 31l1.500 3 2 2.500 3-1 4.500-11 2 1.500 1.500 3.500 4 2v7.600H41.500z" fill="#9a9a9a"/><path d="M41.500 36.500l6-1 5 1.500 7.500-1v3.100H41.500z" fill="#a9a9a9"/><path d="M49 36.500h7v1.300h-7z" fill="#dedede"/></svg></div><div class="c" style="letter-spacing:-0.51px;left:120.3px;top:27.7px">Curso de seguridad Laboral</div><div class="c" style="letter-spacing:-0.30px;left:387.8px;top:27.7px">60</div><div class="c" style="letter-spacing:-0.16px;left:412.4px;top:27.7px">02/09/2024</div><div class="bad venc" style="left:502.2px;top:26.7px"><span style="letter-spacing:-0.50px">Vencido</span></div><div class="c" style="letter-spacing:-0.11px;left:690.0px;top:27.7px">0%</div><div class="bad req" style="left:808.0px;top:26.7px"><span style="letter-spacing:-0.52px">Requerida</span></div><div class="c" style="letter-spacing:-0.63px;left:934.2px;top:27.7px">Presencial</div><svg class="abs" style="left:1070.0px;top:32.0px" width="8" height="9" viewBox="0 0 8 9"><path d="M1.300 1.200v6.600l5.200-3.300z" fill="none" stroke="#2f4daa" stroke-width="1.050" stroke-linejoin="round"/></svg><svg class="abs" style="left:1092.0px;top:32.5px" width="14" height="9" viewBox="0 0 14 9"><path d="M.4 1.100h2.800M.4 4.500h2.800M.4 7.900h6" stroke="#2f4daa" stroke-width="1" opacity=".75"/><circle cx="8" cy="3.200" r="2.500" fill="none" stroke="#2f4daa" stroke-width="1.050"/><path d="M9.900 5.100l2.600 2.700" stroke="#2f4daa" stroke-width="1.150"/></svg></div>
<div class="row" style="top:362.0px"><div class="thumb"><svg width="102" height="60" viewBox="0 0 102 60"><defs><filter id="b4" x="-5%" y="-5%" width="110%" height="110%"><feGaussianBlur stdDeviation=".35"/></filter></defs>
<rect width="102" height="60" fill="#262b27"/>
<g filter="url(#b4)">
<rect x="27.700" y="10.600" width="53.700" height="44.400" rx="4.500" fill="#e2e3ee"/>
<rect x="28" y="58.200" width="44" height="1.800" fill="#cfd3ea"/>
<rect x="35" y="23" width="29" height="27" rx="1.200" fill="#f4c22e"/>
<path d="M37 44.500c5-1 8-6 10-13 .8-3 1.200-5 2-5.500.5 3 .5 8 1.500 10.500l3-10c1 4 1.500 9 2.500 12l2-3 1.500 2c-1 2-2 3.500-3.500 4.500-1.500-1-2-2.500-2.500-4l-2 6c-1.500-1.500-2-3.500-2.500-6-2 5-6 8-12 8.500z" fill="#f3f3f8"/><circle cx="59" cy="43.500" r="2" fill="#f3f3f8"/><circle cx="37.500" cy="34" r="1" fill="#f0e6d8"/>
<path d="M13 8c0-2 1.500-3 3.500-3h9c2 0 3.500 1 3.500 3v6c0 3-2.500 5-6 5h-5c-3 0-5-2-5-4.500z" fill="#e9e9f0"/><path d="M15 10.500h7" stroke="#f09a2a" stroke-width="1.100"/><path d="M17 13h8" stroke="#4a6fd0" stroke-width=".9"/><circle cx="17.500" cy="7.500" r=".8" fill="#f0a020"/>
<path d="M6 24c0-3 3-5 7-5h5c2 0 3 1.500 3 3v4c0 2-2 3-4 3H10c-2.500 0-4-2-4-5z" fill="#d9dae3"/>
<circle cx="26.700" cy=".9" r="1.500" fill="#e8b020"/>
<circle cx="22.800" cy="25.600" r="3.800" fill="#2a1d1c"/><path d="M21.500 25h3.500v4.500h-3z" fill="#8a5a40"/>
<path d="M15.500 31c2-2.500 11-3 13 0l.5 8-2 6H16z" fill="#f4f4f6"/><path d="M18 33l10-1 1.500 6-9 2z" fill="#e6e4e0"/>
<path d="M7 31.500c2-2.500 9-3.500 13-1.500l1 4c-4 3-10 3-13 1.500z" fill="#f0a070"/><path d="M9 30c3-1.500 8-1.500 11 .5l-1.500 2.500H9.500z" fill="#3f64c8"/>
<path d="M14.600 44.500h10.600l-.7 14.800h-3.600l-1-10-1.300 10h-3.600z" fill="#1c2444"/>
<rect x="29.300" y="35.600" width="2.500" height="13.200" rx="1" fill="#b9a8ee"/>
<path d="M26.500 50.500h5.500l-1 4.500h-3.500z" fill="#e7a51e"/><path d="M26 49.500h6.500v1.500H26z" fill="#bfbfc8"/>
<path d="M47.500 50h5.500l-1 4h-3.500z" fill="#e7a51e"/><path d="M47 49h6.500v1.400H47z" fill="#bfbfc8"/>
<circle cx="40.200" cy="3" r="3.400" fill="#5a3326"/><circle cx="40.200" cy="3.800" r="2.100" fill="#e9b392"/>
<path d="M32.700 14c0-5 3-8.500 7.500-8.500s6.500 3.500 6.500 8.500z" fill="#f08a2a"/>
<path d="M34 15.500c2-1.500 13-1.500 15 0v3.500c-3 1.500-12 1.500-15 0z" fill="#f2f2f5"/>
<path d="M37 19h3.500l-.5 5h-3zM43.500 19H47l-.5 5h-3z" fill="#e8a98a"/><path d="M36 24.300h5v2.500h-5zM42.500 24.300h5.500v2.500h-5.500z" fill="#e8407a"/><path d="M36 26.300h12v1.700H36z" fill="#f2c21c"/>
<rect x="36.500" y="8.700" width="8.700" height="6.900" rx=".5" fill="#2f54c8"/><path d="M38.500 13l2-2.500 1.500 1.500z" fill="#f0c040"/>
<path d="M47 7.300h15v1.200H47z" fill="#f0f0f4"/><path d="M50 5.300h2v2h-2z" fill="#e8b020"/><path d="M53.500 4.300h2v3h-2z" fill="#e8b020"/><path d="M56.500 2.500h2v4.800h-2z" fill="#e8b020"/><path d="M59.300.6h2v6.700h-2z" fill="#5068d8"/>
<path d="M65 4.500c0-3 2.500-5 6-5h14c3 0 5 2 5 4.500s-2 4.700-5 4.700H70c-3 0-5-1.700-5-4.200z" fill="#dcdde4"/><circle cx="76.800" cy="3.700" r="2.100" fill="none" stroke="#e8b020" stroke-width="1.500"/>
<circle cx="67.700" cy="17.500" r="5.500" fill="#f4f0e6"/><path d="M67.700 12a5.500 5.500 0 0 0-2 10.600l1-2.800a2.600 2.600 0 0 1 1-5z" fill="#e8604a"/><path d="M67.700 12a5.500 5.500 0 0 1 5.400 6.500l-2.900-.6a2.600 2.600 0 0 0-2.500-3.100z" fill="#f0c040"/>
<rect x="83.900" y="15" width="7.100" height="6.800" rx=".6" fill="#e8b020"/><rect x="85.500" y="17.200" width="4" height="2.800" fill="#3a3320"/>
<path d="M77 26c3-3 8-1 8 2 3 0 7-2 10-1 1 2 0 5-2 6-3 1-7 0-9-1l-2-2z" fill="#3a2626"/>
<circle cx="78.800" cy="28" r="3.200" fill="#3a2626"/><path d="M77 27.500h3.500v4.500H77z" fill="#d99a78"/>
<path d="M65.500 29c1.500 2 3 4 5 5 2-2 6-3 9-2.500 3 .5 5.500 3 6 6.500l-2 5H72l-1-5c-3-1-6-4-7-8z" fill="#f0b020"/><path d="M64.500 26.500l1.500 3-1.500.8-1.300-2.800z" fill="#d99a78"/>
<path d="M71 41.500c3-2 9-2 13 0l1.500 8-5 10h-4l2-9-5 .5c-2-2-3-6-2.500-9.500z" fill="#4d74c4"/><path d="M83 57h2.500v2.500H83z" fill="#e07a4a"/>
<rect x="83" y="44.300" width="9" height="4.700" rx=".8" fill="#e9e9f4"/><rect x="84" y="45.200" width="7" height="2.900" fill="#5a70e0"/>
</g></svg></div><div class="c" style="letter-spacing:-0.51px;left:120.3px;top:27.7px">Meeting Proyecto Capacitaciones</div><div class="c" style="letter-spacing:-1.41px;left:395.0px;top:27.7px">1</div><div class="c" style="letter-spacing:-0.07px;left:412.4px;top:27.7px">08/11/2024</div><div class="bad venc" style="left:502.2px;top:26.7px"><span style="letter-spacing:-0.50px">Vencido</span></div><div class="c" style="letter-spacing:-0.11px;left:690.0px;top:27.7px">0%</div><div class="bad req" style="left:808.0px;top:26.7px"><span style="letter-spacing:-0.52px">Requerida</span></div><div class="c" style="letter-spacing:-0.43px;left:934.2px;top:27.7px">E-learning</div><svg class="abs" style="left:1070.0px;top:32.0px" width="8" height="9" viewBox="0 0 8 9"><path d="M1.300 1.200v6.600l5.200-3.300z" fill="none" stroke="#2f4daa" stroke-width="1.050" stroke-linejoin="round"/></svg><svg class="abs" style="left:1092.0px;top:32.5px" width="14" height="9" viewBox="0 0 14 9"><path d="M.4 1.100h2.800M.4 4.500h2.800M.4 7.900h6" stroke="#2f4daa" stroke-width="1" opacity=".75"/><circle cx="8" cy="3.200" r="2.500" fill="none" stroke="#2f4daa" stroke-width="1.050"/><path d="M9.900 5.100l2.600 2.700" stroke="#2f4daa" stroke-width="1.150"/></svg></div>
<div class="row" style="top:435.0px"><div class="thumb"><svg width="102" height="60"><rect width="102" height="60" fill="#dcdde2"/></svg></div></div>
</div>
</div>
<div class="abs" style="left:1156.500px;top:537px;width:29.500px;height:29.500px;border-radius:50%;background:#fff;box-shadow:0 4px 14px rgba(30,40,70,.16);z-index:20"></div>
<svg class="abs" style="left:1166.500px;top:547.700px;z-index:21" width="9" height="9" viewBox="0 0 9 9"><path d="M.7.7l7.600 7.600M8.300.7L.7 8.300" stroke="#222" stroke-width="1.100"/></svg>
<div class="abs" style="left:1192px;top:534.300px;width:162px;height:32.500px;border-radius:15px;background:#fff;box-shadow:0 5px 16px rgba(30,40,70,.17);z-index:20"></div>
<div class="abs" style="letter-spacing:-0.62px;left:1201.700px;top:542.500px;font-size:11.500px;line-height:15px;color:#1b1d3e;white-space:nowrap;z-index:21">Hola! ¿Cómo te puedo ayudar?</div>
<div class="abs" style="left:1317px;top:584px;width:38px;height:38px;border-radius:50%;background:#2f4baa;box-shadow:0 2px 8px rgba(30,40,70,.2);z-index:20"></div>
<svg class="abs" style="left:1328px;top:598px;z-index:21" width="16" height="12" viewBox="0 0 16 12"><rect x=".5" y=".6" width="14.800" height="7.500" rx="3.700" fill="#fff"/><path d="M10.300 7.600h3.300v3z" fill="#fff"/></svg>
<div class="abs" style="left:1362px;top:45px;width:4px;height:588px;background:#e8eaf6;z-index:5"></div>
<div class="abs" style="left:1362px;top:45px;width:4px;height:402px;background:#b9b9ba;z-index:6"></div>
</body>
</html>
